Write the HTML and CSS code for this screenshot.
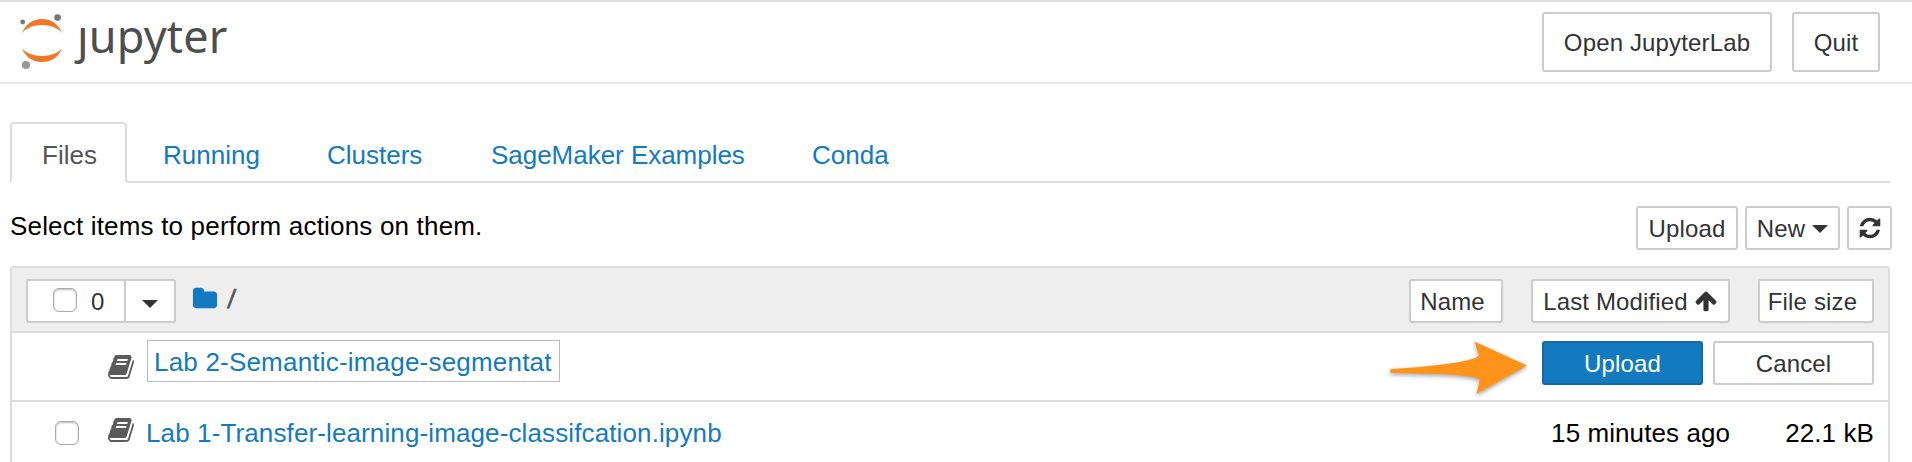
FILE: index.html
```html
<!DOCTYPE html>
<html lang="en">
<head>
<meta charset="utf-8">
<title>Jupyter</title>
<link rel="stylesheet" href="styles.css">
</head>
<body>
<svg class="defs" width="0" height="0" aria-hidden="true">
  <symbol id="book" viewBox="0 0 1792 1792"><path d="M1703 478q40 57 18 129l-275 906q-19 64-76.500 107.500t-122.500 43.500h-923q-77 0-148.500-53.500t-99.500-131.500q-24-67-2-127 0-4 3-27t4-37q1-8-3-21.500t-3-19.500q2-11 8-21t16.500-23.500 16.500-23.500q23-38 45-91.500t30-91.500q3-10 .5-30t-.5-28q3-11 17-28t17-23q21-36 42-92t25-90q1-9-2.500-32t.5-28q4-13 22-30.500t22-22.500q19-26 42.500-84.500t27.500-96.500q1-8-3-25.500t-2-26.500q2-8 9-18t18-23 17-21q8-12 16.500-30.500t15-35 16-36 19.500-32 26.500-23.500 36-11.500 47.500 5.500l-1 3q38-9 51-9h761q74 0 114 56t18 130l-274 906q-36 119-71.500 153.500t-128.500 34.500h-869q-27 0-38 15-11 16-1 43 24 70 144 70h923q29 0 56-15.500t35-41.500l300-987q7-22 5-57 38 15 59 43zm-1064 2q-4 13 2 22.500t20 9.500h608q13 0 25.500-9.500t16.500-22.500l21-64q4-13-2-22.500t-20-9.500h-608q-13 0-25.500 9.500t-16.500 22.500zm-83 256q-4 13 2 22.500t20 9.500h608q13 0 25.500-9.500t16.500-22.500l21-64q4-13-2-22.500t-20-9.500h-608q-13 0-25.500 9.500t-16.500 22.500z"/></symbol>
</svg>
<header class="header">
  <a class="logo">
    <svg class="logo-mark" width="44" height="58" viewBox="0 0 44 58">
      <path class="orange" d="M2 19Q8 5 22 5T42 19Q35 11 22 11T2 19ZM2 34.500Q9 42 22 42T42 34.500Q36 48 22 48T2 34.500Z"/>
      <circle class="grey" cx="2.700" cy="8" r="2.400"/>
      <circle class="grey" cx="37.600" cy="3.600" r="3.300"/>
      <circle class="light" cx="5.900" cy="51" r="4.100"/>
    </svg>
    <span class="wordmark"><span class="dotless">j</span>upyter</span>
  </a>
  <div class="header-buttons">
    <button class="btn open">Open JupyterLab</button>
    <button class="btn quit">Quit</button>
  </div>
</header>
<main class="page">
  <nav class="tabs">
    <a class="tab active">Files</a>
    <a class="tab running">Running</a>
    <a class="tab clusters">Clusters</a>
    <a class="tab sagemaker">SageMaker Examples</a>
    <a class="tab conda">Conda</a>
  </nav>
  <div class="toolbar">
    <span class="hint">Select items to perform actions on them.</span>
    <div class="tools">
      <button class="btn small upload">Upload</button>
      <button class="btn small new">New<i class="caret"></i></button>
      <button class="btn small refresh"><svg width="24" height="24" viewBox="0 0 1792 1792"><path d="M1639 1056q0 5-1 7-64 268-268 434.500t-478 166.500q-146 0-282.500-55t-243.500-157l-129 129q-19 19-45 19t-45-19-19-45v-448q0-26 19-45t45-19h448q26 0 45 19t19 45-19 45l-137 137q71 66 161 102t187 36q134 0 250-65t186-179q11-17 53-117 8-23 30-23h192q13 0 22.500 9.500t9.500 22.500zm25-800v448q0 26-19 45t-45 19h-448q-26 0-45-19t-19-45 19-45l138-138q-148-137-349-137-134 0-250 65t-186 179q-11 17-53 117-8 23-30 23h-199q-13 0-22.500-9.500t-9.500-22.500v-7q65-268 270-434.500t480-166.500q146 0 284 55.500t245 156.500l130-129q19-19 45-19t45 19 19 45z"/></svg></button>
    </div>
  </div>
  <section class="list">
    <div class="row list-head">
      <div class="select-group">
        <button class="btn small select-all"><i class="check"></i><span>0</span></button>
        <button class="btn small select-menu"><i class="caret"></i></button>
      </div>
      <svg class="folder" width="26" height="26" viewBox="0 0 1792 1792"><path d="M1728 608v704q0 92-66 158t-158 66h-1216q-92 0-158-66t-66-158v-960q0-92 66-158t158-66h320q92 0 158 66t66 158v32h672q92 0 158 66t66 158z"/></svg>
      <span class="slash">/</span>
      <div class="sorts">
        <button class="btn small name">Name</button>
        <button class="btn small modified">Last Modified<svg width="24" height="24" viewBox="0 0 1792 1792"><path d="M1675 971q0 51-37 90l-75 75q-38 38-91 38-54 0-90-38l-294-293v704q0 52-37.500 84.500t-90.500 32.500h-128q-53 0-90.500-32.500t-37.500-84.500v-704l-294 293q-36 38-90 38t-90-38l-75-75q-38-38-38-90 0-53 38-91l651-651q35-37 90-37 54 0 91 37l651 651q37 39 37 91z"/></svg></button>
        <button class="btn small size">File size</button>
      </div>
    </div>
    <div class="row pending">
      <svg class="book" width="28" height="28"><use href="#book"/></svg>
      <div class="name-input">Lab 2-Semantic-image-segmentat</div>
      <div class="actions">
        <svg class="pointer" width="146" height="62" viewBox="0 0 146 62"><path d="M6 30Q66 26 86 20Q91 18.500 93 16.500L88.500 2.500L141 26.500L90.500 55L94 40.500Q85 36 52 35L7 34Q4 34 4 32Q4 30 6 30Z"/></svg>
        <button class="btn small primary">Upload</button>
        <button class="btn small cancel">Cancel</button>
      </div>
    </div>
    <div class="row file">
      <i class="check"></i>
      <svg class="book" width="28" height="28"><use href="#book"/></svg>
      <a class="file-name">Lab 1-Transfer-learning-image-classifcation.ipynb</a>
      <span class="when">15 minutes ago</span>
      <span class="bytes">22.1 kB</span>
    </div>
  </section>
</main>
</body>
</html>
```
FILE: styles.css
```css
* { box-sizing: border-box; }
body {
  margin: 0;
  height: 462px;
  overflow: hidden;
  background: #fff;
  color: #000;
  font: 26px/36px "Liberation Sans", Arial, sans-serif;
  white-space: nowrap;
}
.defs { position: absolute; }
svg { display: block; flex: none; }

.header {
  height: 84px;
  display: flex;
  justify-content: space-between;
  align-items: flex-start;
  padding: 10px 32px 0 20px;
  border-top: 2px solid #e0e0e0;
  border-bottom: 2px solid #e7e7e7;
}
.logo { display: flex; align-items: flex-start; gap: 13px; padding-top: 2px; }
.orange { fill: #f37726; }
.grey { fill: #767677; }
.light { fill: #989898; }
.wordmark {
  font: 45px/60px "Noto Sans", sans-serif;
  letter-spacing: 0.15px;
  color: #4e4e4e;
  margin-top: -8px;
}
.dotless { display: inline-block; clip-path: inset(22px -4px 0 -12px); }
.header-buttons { display: flex; gap: 20px; }

.btn {
  height: 60px;
  display: flex;
  align-items: center;
  justify-content: center;
  flex: none;
  margin: 0;
  padding: 2px 0 0;
  border: 2px solid #ccc;
  border-radius: 3px;
  background: #fff;
  color: #333;
  fill: #333;
  font: 24px/36px "Liberation Sans", Arial, sans-serif;
  letter-spacing: 0.15px;
}
.open { width: 230px; }
.quit { width: 88px; }
.small { height: 44px; }
.btn svg { margin-top: -2px; }
.caret {
  border: 8px solid transparent;
  border-top-color: #333;
  border-bottom: 0;
}

.page { padding: 38px 20px 0 10px; }
.tabs {
  display: flex;
  gap: 4px;
  width: 1880px;
  height: 61px;
  border-bottom: 2px solid #ddd;
}
.tab {
  height: 61px;
  padding: 15px 0 0 32px;
  color: #137abf;
  flex: none;
}
.tab.active {
  width: 117px;
  padding: 13px 0 0 30px;
  border: 2px solid #ddd;
  border-bottom-color: #fff;
  border-radius: 4px 4px 0 0;
  color: #555;
}
.running { width: 160px; }
.clusters { width: 160px; }
.sagemaker { width: 317px; letter-spacing: -0.03px; }

.toolbar {
  display: flex;
  justify-content: space-between;
  width: 1882px;
  padding-top: 23px;
  height: 83px;
}
.hint { padding-top: 2px; letter-spacing: 0.18px; }
.tools { display: flex; gap: 7px; }
.upload { width: 102px; }
.new { width: 95px; gap: 7px; }
.refresh { width: 45px; }

.list {
  width: 1880px;
  height: 196px;
  border: 2px solid #ddd;
  border-bottom: 0;
  border-radius: 4px 4px 0 0;
}
.row { display: flex; align-items: flex-start; }
.list-head {
  height: 65px;
  padding: 11px 14px 0 14px;
  background: #eee;
  border-bottom: 2px solid #ddd;
}
.select-group { display: flex; }
.select-all { width: 100px; justify-content: flex-start; padding-left: 25px; gap: 14px; border-radius: 3px 0 0 3px; }
.select-all .check { margin-top: -4px; }
.select-menu { width: 52px; margin-left: -2px; border-radius: 0 3px 3px 0; padding-top: 6px; }
.check {
  width: 24px;
  height: 24px;
  flex: none;
  border: 1px solid #aaa;
  border-radius: 6px;
  background: #fff;
  box-shadow: inset 0 1px 2px #bbb;
}
.folder { fill: #137abf; margin: 7px 0 0 16px; }
.slash {
  color: #555;
  margin: 2px 0 0 10px;
  width: 15px;
  font-size: 26px;
  transform: skewX(-6deg);
  -webkit-text-stroke: 0.6px #555;
}
.sorts { display: flex; margin-left: auto; gap: 28px; }
.name { width: 94px; padding-right: 7px; }
.modified { width: 199px; gap: 6px; }
.size { width: 116px; padding-right: 7px; }

.pending { height: 69px; padding: 7px 14px 0 95px; border-bottom: 2px solid #ddd; }
.book { fill: #5b5b5b; }
.pending .book { margin: 13px 12px 0 0; }
.name-input {
  width: 413px;
  height: 42px;
  padding: 3px 0 0 6px;
  border: 1px solid #bbb;
  color: #137abf;
  letter-spacing: 0.2px;
}
.actions { position: relative; display: flex; gap: 10px; margin: 1px 0 0 auto; }
.primary { width: 161px; background: #137abf; border-color: #106ba8; color: #fff; }
.cancel { width: 161px; }
.pointer {
  position: absolute;
  left: -156px;
  top: -2px;
  fill: #ff931a;
  filter: drop-shadow(0 2px 2px rgba(0, 0, 0, .35));
}

.file { padding: 13px 14px 0 43px; }
.file .check { margin-top: 6px; }
.file .book { margin: 1px 12px 0 28px; }
.file-name { color: #137abf; margin-left: -1px; letter-spacing: 0.12px; }
.when { margin-left: auto; letter-spacing: 0.08px; }
.bytes { width: 144px; text-align: right; letter-spacing: 0.1px; }
```
